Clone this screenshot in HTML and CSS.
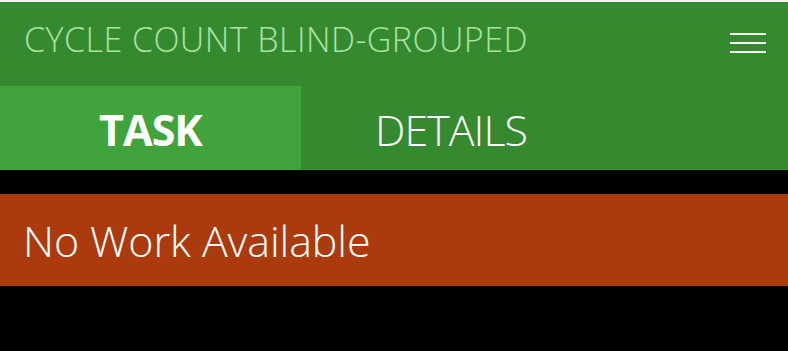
FILE: index.html
```html
<!DOCTYPE html>
<html>
<head>
<meta charset="utf-8">
<link rel="stylesheet" href="styles.css">
</head>
<body>
<div class="app">
  <header class="header">
    <div class="titlebar">
      <h1 class="title">CYCLE COUNT BLIND-GROUPED</h1>
      <button class="menu" aria-label="Menu">
        <svg width="36" height="20" viewBox="0 0 36 20">
          <rect x="0" y="0" width="36" height="2" fill="#fff"/>
          <rect x="0" y="9" width="36" height="2" fill="#fff"/>
          <rect x="0" y="18" width="36" height="2" fill="#fff"/>
        </svg>
      </button>
    </div>
    <nav class="tabs">
      <div class="tab tab-active">TASK</div>
      <div class="tab">DETAILS</div>
    </nav>
  </header>
  <div class="notice">No Work Available</div>
</div>
</body>
</html>
```

FILE: styles.css
```css
html, body {
  margin: 0;
  padding: 0;
  background: #000;
}
body {
  font-family: "Open Sans", "Noto Sans", sans-serif;
  width: 788px;
  height: 351px;
  overflow: hidden;
}
.app {
  border-top: 2px solid #f4f4f4;
}
.header {
  background: #358a2f;
}
.titlebar {
  box-sizing: border-box;
  height: 84px;
  display: flex;
  align-items: flex-start;
  justify-content: space-between;
  padding: 20px 22px 0 24px;
}
.title {
  margin: 0;
  font-size: 34px;
  font-weight: 300;
  color: #abe2a4;
  letter-spacing: 0.45px;
  line-height: 1;
}
.menu {
  background: none;
  border: 0;
  padding: 0;
  display: flex;
  margin-top: 11px;
}
.tabs {
  display: grid;
  grid-template-columns: 301px 300px;
  height: 84px;
}
.tab {
  display: flex;
  align-items: center;
  justify-content: center;
  color: #fff;
  font-size: 43px;
  font-weight: 300;
  letter-spacing: -1px;
  padding-top: 3px;
}
.tab-active {
  background: #41a33b;
  font-weight: 700;
}
.notice {
  margin-top: 24px;
  height: 92px;
  background: #ab3b0c;
  color: #fff;
  font-size: 43px;
  font-weight: 300;
  letter-spacing: -0.1px;
  display: flex;
  align-items: center;
  padding-left: 23px;
}
```
